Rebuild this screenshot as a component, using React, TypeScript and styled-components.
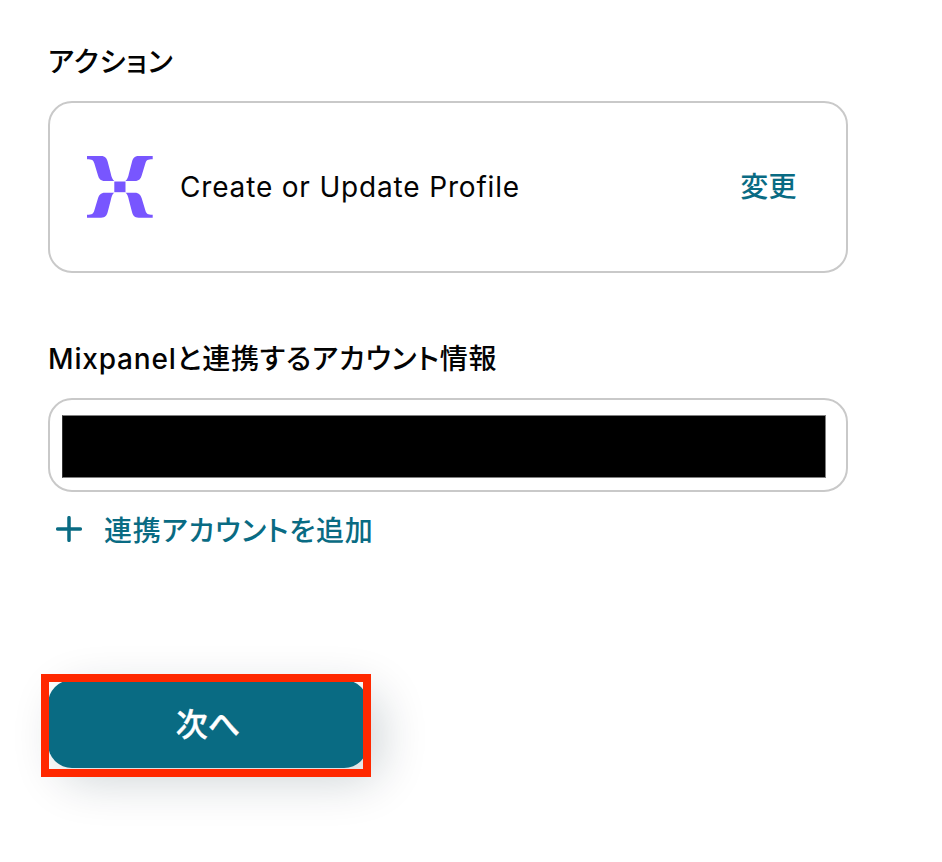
import React from 'react';
import styled, { createGlobalStyle } from 'styled-components';

const GlobalStyle = createGlobalStyle`
  *, *::before, *::after { box-sizing: border-box; }
  body {
    margin: 0;
    background: #fff;
    color: #030303;
    font-family: Inter, "Noto Sans CJK JP", sans-serif;
    font-feature-settings: "palt";
    letter-spacing: 0.83px;
  }
`;

const Page = styled.main`
  display: flex;
  flex-direction: column;
  align-items: flex-start;
  height: 862px;
  padding: 41px 0 0 48px;
  overflow: hidden;
`;

const Label = styled.h2<{ $spaced?: boolean }>`
  margin: ${(p) => (p.$spaced ? '65px 0 18px' : '0 0 18px')};
  height: 42px;
  font-size: 28px;
  line-height: 42px;
  font-weight: 500;
  white-space: nowrap;
`;

const ActionCard = styled.section`
  display: flex;
  align-items: center;
  width: 800px;
  height: 172px;
  padding: 0 49px 0 37px;
  border: 2px solid #c9c9c9;
  border-radius: 24px;
`;

const Logo = styled.svg`
  flex: none;
  width: 66px;
  height: 64px;
`;

const ActionName = styled.span`
  margin-left: 27px;
  font-size: 28px;
  line-height: 42px;
`;

const ChangeLink = styled.button`
  margin-left: auto;
  padding: 0;
  border: 0;
  background: none;
  color: #096b83;
  font: inherit;
  font-size: 28px;
  font-weight: 500;
  line-height: 42px;
  letter-spacing: 0.4px;
`;

const AccountField = styled.section`
  width: 800px;
  height: 94px;
  padding: 15px 0 0 12px;
  border: 2px solid #c9c9c9;
  border-radius: 24px;
`;

const Redaction = styled.div`
  width: 764px;
  height: 63px;
  background: #000;
  border: 1px solid #808080;
  border-left-color: #333;
`;

const AddAccount = styled.button`
  display: flex;
  align-items: center;
  height: 42px;
  margin: 18px 0 0 8px;
  padding: 0;
  border: 0;
  background: none;
  color: #096b83;
  font: inherit;
  font-size: 28px;
  font-weight: 500;
  line-height: 42px;
  letter-spacing: 0.8px;
`;

const PlusIcon = styled.svg`
  width: 26px;
  height: 26px;
  margin: 0 22px 4px 0;
`;

const Highlight = styled.div`
  position: relative;
  width: 320px;
  margin-top: 128px;

  &::after {
    content: '';
    position: absolute;
    top: -6px;
    left: -7px;
    width: 330px;
    height: 103px;
    border: 8px solid #ff2800;
  }
`;

const NextButton = styled.button`
  display: block;
  width: 320px;
  height: 88px;
  padding: 2px 0 0;
  border: 0;
  border-radius: 24px;
  background: #096b83;
  color: #fff;
  font: inherit;
  font-size: 32px;
  font-weight: 500;
  line-height: 48px;
  letter-spacing: 0;
  -webkit-text-stroke: 0.4px #fff;
  box-shadow: 12px 12px 48px rgba(12, 34, 51, 0.2);
`;

export default function App() {
  return (
    <>
      <GlobalStyle />
      <Page>
        <Label>アクション</Label>
        <ActionCard>
          <Logo viewBox="0 0 66 64" fill="#7856ff" aria-hidden="true">
            <path d="M0 1H14C18.500 1 19.800 3.500 20.700 6.700L23.700 18.300C24.500 22 25.500 25 27.300 26H18C13.500 26 11.900 23.500 11 20.500L7.300 8.300C6.300 5 5 4.200 0 4.200Z" />
            <path d="M65.700 1H51.700C47.200 1 45.900 3.500 45 6.700L42 18.300C41.200 22 40.200 25 38.400 26H47.700C52.200 26 53.800 23.500 54.700 20.500L58.400 8.300C59.400 5 60.700 4.200 65.700 4.200Z" />
            <path d="M0 62.700H14C18.500 62.700 19.800 60.200 20.700 57L23.700 45.400C24.500 41.700 25.500 38.700 27.300 37.700H18C13.500 37.700 11.900 40.200 11 43.200L7.300 55.400C6.300 58.700 5 59.700 0 59.700Z" />
            <path d="M65.700 62.700H51.700C47.200 62.700 45.900 60.200 45 57L42 45.400C41.200 41.700 40.200 38.700 38.400 37.700H47.700C52.200 37.700 53.800 40.200 54.700 43.200L58.400 55.400C59.400 58.700 60.700 59.700 65.700 59.700Z" />
            <path d="M27.300 26.500H38.500V37.200H27.300Z" />
          </Logo>
          <ActionName>Create or Update Profile</ActionName>
          <ChangeLink>変更</ChangeLink>
        </ActionCard>
        <Label $spaced>Mixpanelと連携するアカウント情報</Label>
        <AccountField>
          <Redaction />
        </AccountField>
        <AddAccount>
          <PlusIcon viewBox="0 0 26 26" fill="none" stroke="currentColor" strokeWidth="3.500" strokeLinecap="round" aria-hidden="true">
            <path d="M13 1.700V24.300M1.700 13H24.300" />
          </PlusIcon>
          連携アカウントを追加
        </AddAccount>
        <Highlight>
          <NextButton>次へ</NextButton>
        </Highlight>
      </Page>
    </>
  );
}
